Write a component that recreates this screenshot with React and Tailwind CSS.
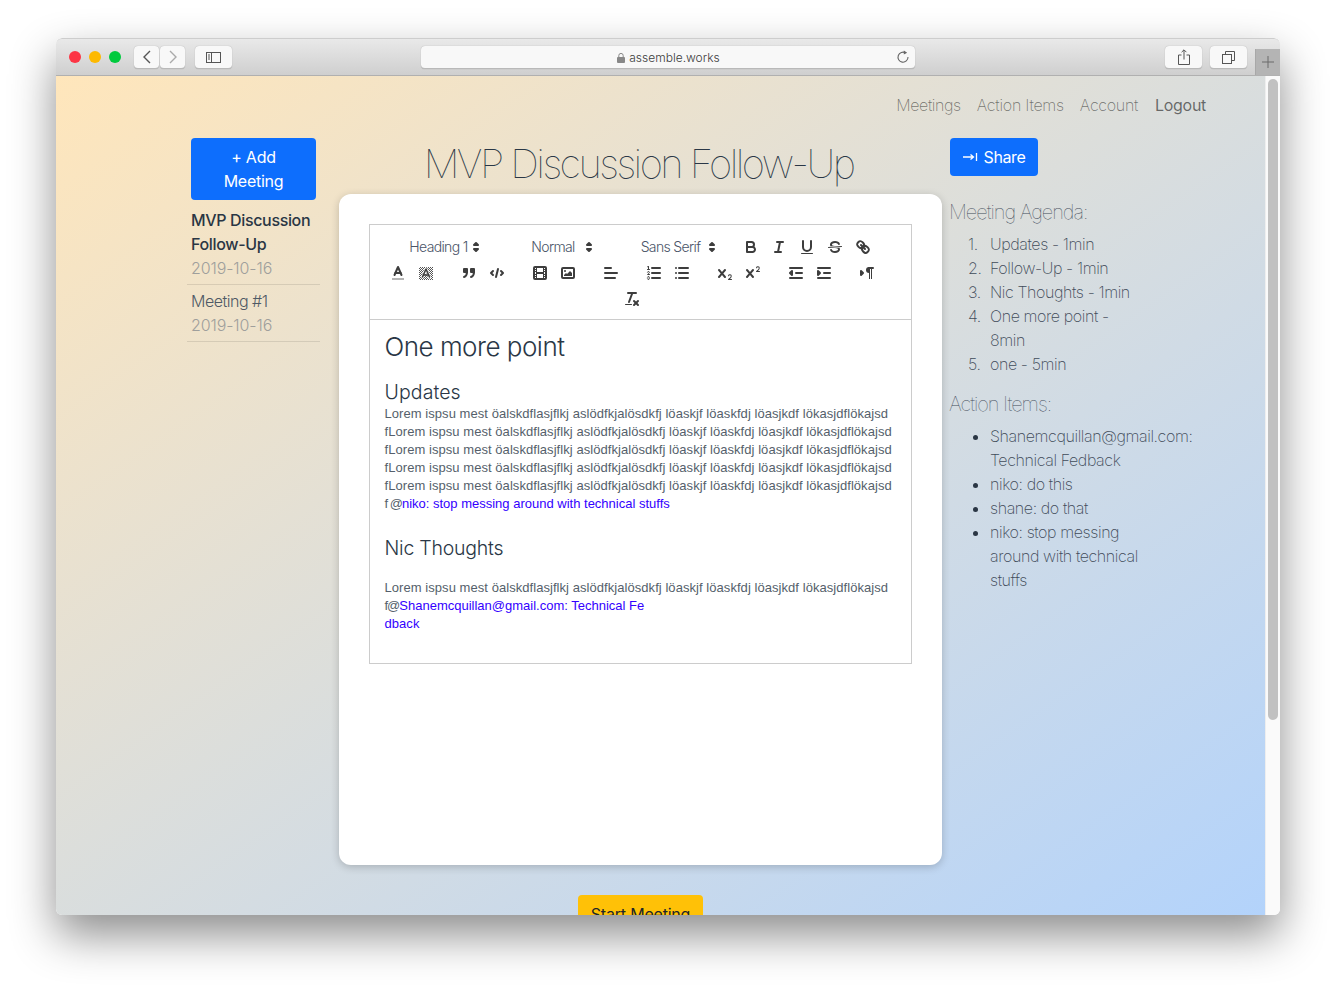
import React from "react";

const Svg = ({ children }) => (
  <svg viewBox="0 0 18 18" width="18" height="18" fill="none" stroke="#3d3d3d" strokeWidth="2" strokeLinecap="round" strokeLinejoin="round" className="block">
    {children}
  </svg>
);
const F = (p) => <path fill="#3d3d3d" stroke="none" {...p} />;
const R = (p) => <rect fill="#3d3d3d" stroke="none" {...p} />;

const Btn = ({ children }) => (
  <div className="w-[28px] h-[24px] px-[5px] py-[3px]">
    <Svg>{children}</Svg>
  </div>
);

const Group = ({ children }) => <div className="flex mr-[15px] h-[24px]">{children}</div>;

const Picker = ({ label, w }) => (
  <div className={`relative h-[24px] mr-[15px] text-center text-[14px] leading-[24px] text-[#4a5568] font-['Inter',sans-serif] font-light tracking-[-0.65px] ${w}`}>
    {label}
    <svg viewBox="0 0 18 18" width="18" height="18" className="absolute right-[1px] top-[3px]" fill="#3d3d3d" stroke="#3d3d3d" strokeWidth="2" strokeLinejoin="round">
      <polygon points="7 11 9 13 11 11 7 11" />
      <polygon points="7 7 9 5 11 7 7 7" />
    </svg>
  </div>
);

const Toolbar = () => (
  <div className="flex flex-wrap justify-center gap-y-[2px] pl-[7px] pr-[9px] pt-[10px] pb-[8px] border-b border-[#cccccc]">
    <Picker label="Heading 1" w="w-[98px] pl-[4px]" />
    <Picker label="Normal" w="w-[98px] pl-[7px]" />
    <Picker label="Sans Serif" w="w-[108px] pl-[6px]" />
    <Group>
      <Btn>
        <path d="M5,4H9.5A2.5,2.5,0,0,1,12,6.5v0A2.5,2.5,0,0,1,9.5,9H5A0,0,0,0,1,5,9V4A0,0,0,0,1,5,4Z" />
        <path d="M5,9h5.5A2.5,2.5,0,0,1,13,11.5v0A2.5,2.5,0,0,1,10.5,14H5a0,0,0,0,1,0,0V9A0,0,0,0,1,5,9Z" />
      </Btn>
      <Btn>
        <line x1="7" x2="13" y1="4" y2="4" />
        <line x1="5" x2="11" y1="14" y2="14" />
        <line x1="8" x2="10" y1="14" y2="4" />
      </Btn>
      <Btn>
        <path d="M5,3V9a4.012,4.012,0,0,0,4,4H9a4.012,4.012,0,0,0,4-4V3" />
        <R x="3" y="15" width="12" height="1" rx="0.5" ry="0.5" />
      </Btn>
      <Btn>
        <line x1="15.5" x2="2.5" y1="8.5" y2="9.5" strokeWidth="1" />
        <F d="M9.007,8C6.542,7.791,6,7.519,6,6.5,6,5.792,7.283,5,9,5c1.571,0,2.765.679,2.969,1.309a1,1,0,0,0,1.9-.617C13.356,4.106,11.354,3,9,3,6.2,3,4,4.538,4,6.5a3.2,3.2,0,0,0,.5,1.843Z" />
        <F d="M8.984,10C11.457,10.208,12,10.479,12,11.5c0,.708-1.283,1.5-3,1.5-1.571,0-2.765-.679-2.969-1.309a1,1,0,1,0-1.9.617C4.644,13.894,6.646,15,9,15c2.8,0,5-1.538,5-3.5a3.2,3.2,0,0,0-.5-1.843Z" />
      </Btn>
      <Btn>
        <line x1="7" x2="11" y1="7" y2="11" />
        <path d="M8.9,4.577a3.476,3.476,0,0,1,.36,4.679A3.476,3.476,0,0,1,4.577,8.9C3.185,7.5,2.035,6.4,4.217,4.217S7.5,3.185,8.9,4.577Z" />
        <path d="M13.423,9.1a3.476,3.476,0,0,0-4.679-.36,3.476,3.476,0,0,0,.36,4.679c1.392,1.392,2.5,2.542,4.679.36S14.815,10.5,13.423,9.1Z" />
      </Btn>
    </Group>
    <Group>
      <Btn>
        <line x1="3" x2="15" y1="15" y2="15" stroke="#b5b5b5" strokeLinecap="butt" />
        <polyline points="5.5 11 9 3 12.5 11" />
        <line x1="11.63" x2="6.38" y1="9" y2="9" />
      </Btn>
      <Btn>
        <defs>
          <pattern id="hatch" width="2" height="2" patternUnits="userSpaceOnUse">
            <rect width="1" height="1" fill="#555" stroke="none" />
            <rect x="1" y="1" width="1" height="1" fill="#555" stroke="none" />
          </pattern>
        </defs>
        <rect x="2" y="3" width="14" height="13" fill="url(#hatch)" stroke="none" />
        <polyline points="5.5 13 9 5 12.5 13" stroke="#ffffff" strokeWidth="3" />
        <polyline points="5.5 13 9 5 12.5 13" strokeWidth="1.6" />
        <line x1="11.63" x2="6.38" y1="11" y2="11" strokeWidth="1.6" />
      </Btn>
    </Group>
    <Group>
      <Btn>
        <rect x="4" y="5" width="3" height="3" fill="#3d3d3d" />
        <rect x="11" y="5" width="3" height="3" fill="#3d3d3d" />
        <path d="M7,8c0,4.031-3,5-3,5" />
        <path d="M14,8c0,4.031-3,5-3,5" />
      </Btn>
      <Btn>
        <polyline points="5 7 3 9 5 11" />
        <polyline points="13 7 15 9 13 11" />
        <line x1="10" x2="8" y1="5" y2="13" />
      </Btn>
    </Group>
    <Group>
      <Btn>
        <rect x="3" y="3" width="12" height="12" rx="1" ry="1" />
        <R x="5" y="3" width="1" height="12" />
        <R x="12" y="3" width="1" height="12" />
        <R x="5" y="8" width="8" height="2" />
        <R x="3" y="5" width="3" height="1" />
        <R x="3" y="7" width="3" height="1" />
        <R x="3" y="10" width="3" height="1" />
        <R x="3" y="12" width="3" height="1" />
        <R x="12" y="5" width="3" height="1" />
        <R x="12" y="7" width="3" height="1" />
        <R x="12" y="10" width="3" height="1" />
        <R x="12" y="12" width="3" height="1" />
      </Btn>
      <Btn>
        <rect x="3" y="4" width="12" height="10" rx="1" ry="1" />
        <circle cx="6" cy="7" r="1" fill="#3d3d3d" stroke="none" />
        <polygon points="5 12 5 11 7 9 8 10 11 7 13 9 13 12 5 12" fill="#3d3d3d" stroke="none" />
      </Btn>
    </Group>
    <Group>
      <Btn>
        <line x1="3" x2="15" y1="9" y2="9" />
        <line x1="3" x2="13" y1="14" y2="14" />
        <line x1="3" x2="9" y1="4" y2="4" />
      </Btn>
    </Group>
    <Group>
      <Btn>
        <line x1="7" x2="15" y1="4" y2="4" />
        <line x1="7" x2="15" y1="9" y2="9" />
        <line x1="7" x2="15" y1="14" y2="14" />
        <line x1="2.5" x2="4.5" y1="5.5" y2="5.5" strokeWidth="1" />
        <F d="M3.5,6A0.5,0.5,0,0,1,3,5.5V3.085l-0.276.138A0.5,0.5,0,0,1,2.053,3c-0.124-.247-0.023-0.324.224-0.447l1-.5A0.5,0.5,0,0,1,4,2.5v3A0.5,0.5,0,0,1,3.5,6Z" />
        <path strokeWidth="1" d="M4.5,10.5h-2c0-.234,1.85-1.076,1.85-2.234A0.959,0.959,0,0,0,2.5,8.156" />
        <path strokeWidth="1" d="M2.5,14.846a0.959,0.959,0,0,0,1.85-.109A0.7,0.7,0,0,0,3.75,14a0.688,0.688,0,0,0,.6-0.736,0.959,0.959,0,0,0-1.85-.109" />
      </Btn>
      <Btn>
        <line x1="6" x2="15" y1="4" y2="4" />
        <line x1="6" x2="15" y1="9" y2="9" />
        <line x1="6" x2="15" y1="14" y2="14" />
        <line x1="3" x2="3" y1="4" y2="4" />
        <line x1="3" x2="3" y1="9" y2="9" />
        <line x1="3" x2="3" y1="14" y2="14" />
      </Btn>
    </Group>
    <Group>
      <Btn>
        <F d="M15.5,15H13.861a3.858,3.858,0,0,0,1.914-2.975,1.8,1.8,0,0,0-1.6-1.751A1.921,1.921,0,0,0,12.021,11.7a0.50013,0.50013,0,1,0,.957.291h0a0.914,0.914,0,0,1,1.053-.725,0.81,0.81,0,0,1,.744.762c0,1.076-1.16971,1.86982-1.93971,2.43082A1.45639,1.45639,0,0,0,12,15.5a0.5,0.5,0,0,0,.5.5h3A0.5,0.5,0,0,0,15.5,15Z" />
        <F d="M9.65,5.241a1,1,0,0,0-1.409.108L6,7.964,3.759,5.349A1,1,0,0,0,2.192,6.59178Q2.21541,6.6213,2.241,6.649L4.684,9.5,2.241,12.35A1,1,0,0,0,3.71,13.70722q0.02557-.02768.049-0.05722L6,11.036,8.241,13.65a1,1,0,1,0,1.567-1.24277Q9.78459,12.3777,9.759,12.35L7.316,9.5,9.759,6.651A1,1,0,0,0,9.65,5.241Z" />
      </Btn>
      <Btn>
        <F d="M15.5,7H13.861a4.015,4.015,0,0,0,1.914-2.975,1.8,1.8,0,0,0-1.6-1.751A1.922,1.922,0,0,0,12.021,3.7a0.5,0.5,0,1,0,.957.291,0.917,0.917,0,0,1,1.053-.725,0.81,0.81,0,0,1,.744.762c0,1.077-1.164,1.925-1.934,2.486A1.423,1.423,0,0,0,12,7.5a0.5,0.5,0,0,0,.5.5h3A0.5,0.5,0,0,0,15.5,7Z" />
        <F d="M9.651,5.241a1,1,0,0,0-1.41.108L6,7.964,3.759,5.349a1,1,0,1,0-1.519,1.3L4.683,9.5,2.241,12.35a1,1,0,1,0,1.519,1.3L6,11.036,8.241,13.65a1,1,0,0,0,1.519-1.3L7.317,9.5,9.759,6.651A1,1,0,0,0,9.651,5.241Z" />
      </Btn>
    </Group>
    <Group>
      <Btn>
        <line x1="3" x2="15" y1="14" y2="14" />
        <line x1="3" x2="15" y1="4" y2="4" />
        <line x1="9" x2="15" y1="9" y2="9" />
        <polygon points="5 7 5 11 3 9 5 7" fill="#3d3d3d" />
      </Btn>
      <Btn>
        <line x1="3" x2="15" y1="14" y2="14" />
        <line x1="3" x2="15" y1="4" y2="4" />
        <line x1="9" x2="15" y1="9" y2="9" />
        <polygon points="3 7 3 11 5 9 3 7" fill="#3d3d3d" />
      </Btn>
    </Group>
    <Group>
      <Btn>
        <polygon points="3 11 5 9 3 7 3 11" fill="#3d3d3d" />
        <line x1="15" x2="11" y1="4" y2="4" />
        <F d="M11,3a3,3,0,0,0,0,6h1V3H11Z" />
        <R x="11" y="4" width="1" height="11" />
        <R x="13" y="4" width="1" height="11" />
      </Btn>
    </Group>
    <Group>
      <Btn>
        <line x1="5" x2="13" y1="3" y2="3" />
        <line x1="6" x2="9.35" y1="12" y2="3" />
        <line x1="11" x2="15" y1="11" y2="15" />
        <line x1="15" x2="11" y1="11" y2="15" />
        <R x="2" y="14" width="7" height="1" rx="0.5" ry="0.5" />
      </Btn>
    </Group>
  </div>
);

const LOREM = "Lorem ispsu mest öalskdflasjflkj aslödfkjalösdkfj löaskjf löaskfdj löasjkdf lökasjdflökajsd";

const Editor = () => (
  <div className="border border-[#cccccc] h-[440px] font-['Liberation_Sans',sans-serif]">
    <Toolbar />
    <div className="pl-[14.5px] pr-[10px] pt-[12px] text-[13px] leading-[18px] tracking-[0.055px] text-[#555f6b]">
      <h1 className="text-[26px] leading-[30px] font-['Inter',sans-serif] font-light tracking-[-0.5px] text-[#2a3746] mb-[19px]">One more point</h1>
      <h2 className="text-[19.5px] leading-[24px] font-['Inter',sans-serif] font-light tracking-[0.1px] text-[#2a3746] mt-[-1px] mb-[1px]">Updates</h2>
      <div>{LOREM}</div>
      <div>f{LOREM}</div>
      <div>f{LOREM}</div>
      <div>f{LOREM}</div>
      <div>f{LOREM}</div>
      <div>
        <span className="tracking-[-1px]">f @</span>
        <span className="text-[#3300ff] tracking-normal">niko: stop messing around with technical stuffs</span>
      </div>
      <h2 className="text-[19.5px] leading-[24px] font-['Inter',sans-serif] font-light tracking-[-0.23px] text-[#2a3746] mt-[23px] mb-[19px]">Nic Thoughts</h2>
      <div>{LOREM}</div>
      <div>
        <span className="tracking-[-1px]">f@</span>
        <span className="text-[#3300ff] tracking-normal">Shanemcquillan@gmail.com: Technical Fe</span>
      </div>
      <div className="text-[#3300ff]">dback</div>
    </div>
  </div>
);

const ChromeBtn = ({ className, children }) => (
  <div className={`h-[23px] bg-[#f8f8f8] rounded-[4px] border-b border-[#b9b9b9] shadow-[0_0_1px_rgba(0,0,0,0.3)] flex items-center justify-center ${className}`}>
    {children}
  </div>
);

const TitleBar = () => (
  <div className="relative h-[38px] shrink-0 flex items-start pt-[7px] bg-gradient-to-b from-[#e9e9e9] to-[#cfcfcf] border-t border-t-[#cdcdcd] border-b border-b-[#b0b0b0] rounded-t-[6px]">
    <div className="flex gap-[8px] ml-[13px] mt-[5px]">
      <div className="w-[12px] h-[12px] rounded-full bg-[#fc3545]" />
      <div className="w-[12px] h-[12px] rounded-full bg-[#fdb900]" />
      <div className="w-[12px] h-[12px] rounded-full bg-[#00ca3e]" />
    </div>
    <ChromeBtn className="w-[25px] ml-[13px]">
      <svg width="10" height="14" viewBox="0 0 10 14" fill="none" stroke="#555" strokeWidth="1.4"><polyline points="8,1 2,7 8,13" /></svg>
    </ChromeBtn>
    <ChromeBtn className="w-[25px] ml-[1px]">
      <svg width="10" height="14" viewBox="0 0 10 14" fill="none" stroke="#aaa" strokeWidth="1.4"><polyline points="2,1 8,7 2,13" /></svg>
    </ChromeBtn>
    <ChromeBtn className="w-[37px] ml-[10px]">
      <svg width="16" height="13" viewBox="0 0 16 13" fill="none" stroke="#555"><rect x="0.5" y="1.5" width="14" height="10" /><line x1="5.5" y1="1.5" x2="5.5" y2="11.5" /><path d="M2 4h2M2 6h2M2 8h2" strokeWidth="1" /></svg>
    </ChromeBtn>
    <ChromeBtn className="w-[494px] ml-[189px] relative">
      <span className="flex items-center gap-[4px] text-[12px] text-[#3c3c3c] font-['Inter',sans-serif] ml-[1px] mt-[1px]">
        <svg width="8" height="10" viewBox="0 0 8 10"><rect x="0" y="4" width="8" height="6" rx="1" fill="#888" /><path d="M1.8 4V2.6a2.2 2.2 0 0 1 4.4 0V4" fill="none" stroke="#888" /></svg>
        assemble.works
      </span>
      <svg className="absolute right-[5px] top-[4px]" width="14" height="14" viewBox="0 0 14 14" fill="none" stroke="#666" strokeWidth="1.1"><path d="M9.6 2.9A5 5 0 1 0 12 7" /><polygon points="7.8,0.4 11.2,2.7 7.8,4.6" fill="#666" stroke="none" /></svg>
    </ChromeBtn>
    <ChromeBtn className="w-[37px] ml-[250px]">
      <svg width="12" height="16" viewBox="0 0 12 16" fill="none" stroke="#555"><path d="M3.5 6H.5v9.5h11V6h-3" /><path d="M6 10.5V1M3.6 3.2 6 .8l2.4 2.4" /></svg>
    </ChromeBtn>
    <ChromeBtn className="w-[37px] ml-[8px]">
      <svg width="13" height="13" viewBox="0 0 13 13" fill="none" stroke="#555"><rect x="0.5" y="3.5" width="9" height="9" /><path d="M3.5 3.5v-3h9v9h-3" /></svg>
    </ChromeBtn>
    <div className="absolute right-0 bottom-0 w-[25px] h-[26px] bg-[#b4b4b4] flex items-center justify-center border-l border-[#a8a8a8]">
      <svg width="12" height="12" viewBox="0 0 12 12" stroke="#6a6a6a" strokeWidth="1"><path d="M6 0v12M0 6h12" /></svg>
    </div>
  </div>
);

const Sidebar = () => (
  <div className="w-[133px] shrink-0">
    <div className="mx-[4px] h-[62px] bg-[#0d6efd] rounded-[4px] text-white font-normal text-center leading-[24px] tracking-[-0.25px] py-[7px] px-[12px]">
      + Add Meeting
    </div>
    <div className="mt-[8px] px-[4px] pb-[4px] border-b border-black/10">
      <div className="font-medium text-[#2a3644] tracking-[-0.35px]">MVP Discussion Follow-Up</div>
      <div className="text-[#9f9f9c] tracking-[-0.1px]">2019-10-16</div>
    </div>
    <div className="pt-[4px] px-[4px] pb-[4px] border-b border-black/10">
      <div className="text-[#4f5965] tracking-[-0.5px]">Meeting #1</div>
      <div className="text-[#9f9f9c] tracking-[-0.1px]">2019-10-16</div>
    </div>
  </div>
);

const Center = () => (
  <div className="w-[603px] shrink-0 ml-[19px]">
    <h1 className="h-[56px] pr-[4px] text-center text-[40px] leading-[51px] font-thin tracking-[-2.55px] text-[#2a3746]">MVP Discussion Follow-Up</h1>
    <div className="h-[671px] bg-white rounded-[12px] p-[30px] shadow-[0_2px_8px_rgba(0,0,0,0.2)]">
      <Editor />
    </div>
    <div className="mt-[30px] mx-auto w-[125px] h-[38px] rounded-[4px] bg-[#ffc107] text-[#212529] font-normal text-center leading-[38px] tracking-[-0.2px]">Start Meeting</div>
  </div>
);

const Num = ({ n, children }) => (
  <li className="flex">
    <span className="w-[22px] shrink-0">{n}.</span>
    <span>{children}</span>
  </li>
);

const RightCol = () => (
  <div className="w-[190px] shrink-0 ml-[8px] text-[#3f4b59] font-extralight tracking-[-0.4px]">
    <div className="w-[88px] h-[38px] bg-[#0d6efd] rounded-[4px] text-white font-normal tracking-[-0.4px] flex items-center justify-center gap-[6px]">
      <svg width="15" height="10" viewBox="0 0 15 10" fill="none" stroke="#fff" strokeWidth="1.3"><path d="M0 5h10M7.5 2.5 10.5 5l-3 2.5" /><path d="M13.5 1v8" /></svg>
      Share
    </div>
    <h3 className="text-[20px] leading-[24px] mt-[24px] ml-[-1px] font-thin tracking-[-1.02px]">Meeting Agenda:</h3>
    <ol className="pl-[18px] mt-[8px] leading-[24px] list-none">
      <Num n="1">Updates - 1min</Num>
      <Num n="2">Follow-Up - 1min</Num>
      <Num n="3">Nic Thoughts - 1min</Num>
      <Num n="4">One more point - 8min</Num>
      <Num n="5">one - 5min</Num>
    </ol>
    <h3 className="text-[20px] leading-[24px] mt-[16px] ml-[-1px] font-thin tracking-[-1.02px]">Action Items:</h3>
    <ul className="list-disc pl-[40px] mt-[8px] leading-[24px] marker:text-[#2a3644]">
      <li>Shanemcquillan@gmail.com: Technical Fedback</li>
      <li>niko: do this</li>
      <li>shane: do that</li>
      <li>niko: stop messing around with technical stuffs</li>
    </ul>
  </div>
);

export default function App() {
  return (
    <div className="h-[989px] bg-white overflow-hidden pt-[38px] pl-[56px] font-['Inter',sans-serif] font-light text-[16px]">
      <div className="w-[1224px] h-[877px] flex flex-col rounded-[6px] overflow-hidden shadow-[0_20px_45px_rgba(0,0,0,0.45)]">
        <TitleBar />
        <div className="flex-1 min-h-0 flex">
          <div className="flex-1 min-w-0 overflow-hidden bg-gradient-to-br from-[#ffe6bb] to-[#b3d3fb]">
            <nav className="h-[62px] pt-[17px] pr-[59px] flex justify-end gap-[16px] leading-[24px] text-black/50 font-extralight">
              <span className="tracking-[-0.4px]">Meetings</span>
              <span className="tracking-[-0.25px]">Action Items</span>
              <span className="tracking-[-0.3px]">Account</span>
              <span className="font-normal text-black/55 ml-[1px] tracking-[-0.3px]">Logout</span>
            </nav>
            <div className="flex pl-[131px]">
              <Sidebar />
              <Center />
              <RightCol />
            </div>
          </div>
          <div className="w-[15px] shrink-0 bg-[#fafafa] border-l border-[#eeeeee] pt-[3px] pl-[2px]">
            <div className="w-[10px] h-[641px] rounded-full bg-[#c1c1c1]" />
          </div>
        </div>
      </div>
    </div>
  );
}
